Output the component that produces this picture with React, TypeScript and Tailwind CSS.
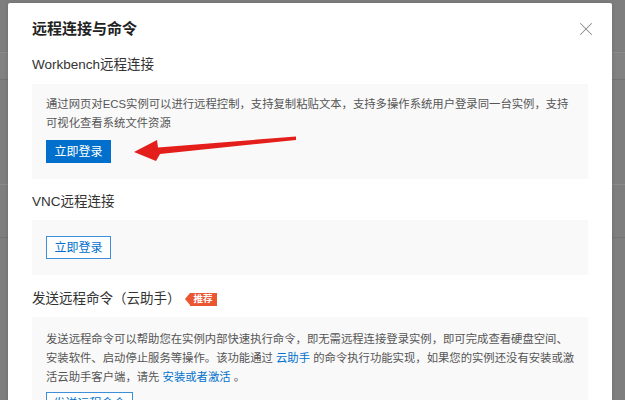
import { X } from "lucide-react";

const font = "font-['Liberation_Sans','Noto_Sans_CJK_SC',sans-serif]";

function Link({ children }: { children: React.ReactNode }) {
  return <span className="text-[#0070cc]">{children}</span>;
}

export default function App() {
  return (
    <div className={`relative h-[400px] w-[625px] overflow-hidden bg-[#7e7e7e] ${font}`}>
      {/* page behind the dim layer */}
      <div className="h-[53px] border-b border-[#8b8b8b]" />
      <div className="h-[27px] border-b border-[#747474] bg-[#828282]" />
      <div className="h-[105px] border-b border-[#8b8b8b]" />
      <div className="h-[53px] border-b border-[#747474]" />

      {/* dialog */}
      <div className="absolute left-[8px] top-[3px] h-[420px] w-[604px] rounded-t-[2px] bg-white px-6 pt-[15px] shadow-[0_0_4px_rgba(0,0,0,0.15)]">
        <h2 className="text-[15px] font-bold leading-[22px] text-[#222]">远程连接与命令</h2>
        <X className="absolute right-[15px] top-[15px] h-[22px] w-[22px] text-[#8a8a8a]" strokeWidth={1.1} />

        <h3 className="mt-[15px] text-[13.5px] leading-[20px] text-[#333]">Workbench远程连接</h3>
        <div className="mt-[9px] bg-[#f9f9f9] px-[14px] pb-4 pt-[11px]">
          <p className="whitespace-nowrap text-[11.35px] leading-[19px] text-[#555]">
            通过网页对ECS实例可以进行远程控制，支持复制粘贴文本，支持多操作系统用户登录同一台实例，支持
            <br />
            可视化查看系统文件资源
          </p>
          <button className="mt-[7px] flex h-[23px] w-[65px] items-center justify-center bg-[#0070cc] text-[12px] text-white">
            立即登录
          </button>
        </div>

        <h3 className="mt-[13px] text-[13.5px] leading-[20px] text-[#333]">VNC远程连接</h3>
        <div className="mt-2 bg-[#f9f9f9] px-[14px] py-4">
          <button className="flex h-[23px] w-[65px] items-center justify-center border border-[#3d8fd9] bg-white text-[12px] text-[#0070cc]">
            立即登录
          </button>
        </div>

        <div className="mt-[14px] flex items-center gap-[4px]">
          <h3 className="text-[13.5px] leading-[20px] text-[#333]">发送远程命令（云助手）</h3>
          <span className="flex items-center">
            <span className="h-0 w-0 border-y-[6.5px] border-r-[5px] border-y-transparent border-r-[#ea5532]" />
            <span className="flex h-[13px] items-center bg-[#ea5532] px-[4px] text-[9.5px] font-bold text-white">推荐</span>
          </span>
        </div>
        <div className="mt-2 bg-[#f9f9f9] px-[14px] pb-4 pt-[13px]">
          <p className="whitespace-nowrap text-[11.35px] leading-[19px] text-[#555]">
            发送远程命令可以帮助您在实例内部快速执行命令，即无需远程连接登录实例，即可完成查看硬盘空间、
            <br />
            安装软件、启动停止服务等操作。该功能通过 <Link>云助手</Link> 的命令执行功能实现，如果您的实例还没有安装或激
            <br />
            活云助手客户端，请先 <Link>安装或者激活</Link> 。
          </p>
          <button className="mt-[5px] flex h-[23px] w-[87px] items-center justify-center border border-[#3d8fd9] bg-white text-[12px] text-[#0070cc]">
            发送远程命令
          </button>
        </div>
      </div>

      {/* red annotation arrow */}
      <svg className="pointer-events-none absolute inset-0" width="625" height="400" viewBox="0 0 625 400">
        <polygon
          points="134,152 157,140 158,147.5 296,136.5 296,140 160,154 156,161"
          fill="#e41f1b"
        />
      </svg>
    </div>
  );
}
